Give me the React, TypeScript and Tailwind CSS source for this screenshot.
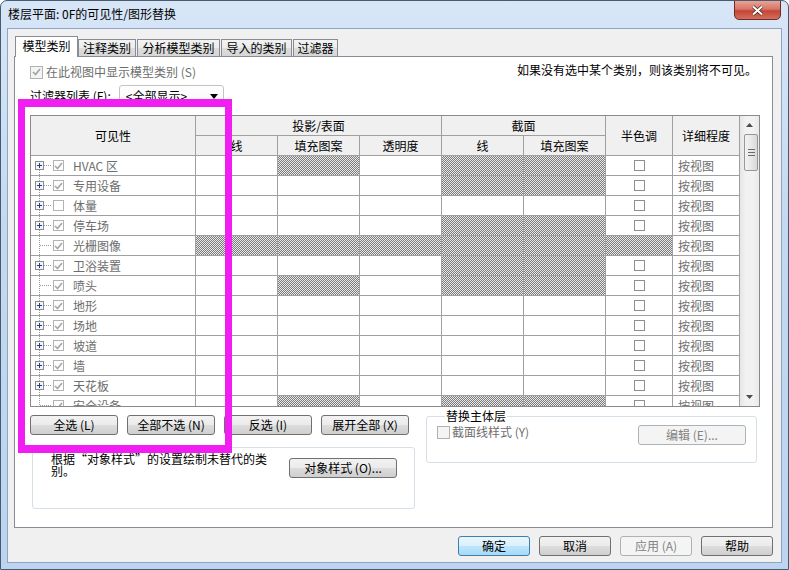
import React from 'react';

const hatch =
  'bg-[image:repeating-conic-gradient(#7c7c7c_0_25%,#e9e9e9_0_50%)] bg-[length:2px_2px]';

type Row = { name: string; plus: boolean; on: boolean; h: string };

// h: hatched flags for 投影线 / 投影填充 / 透明度 / 截面线 / 截面填充 / 半色调
const rows: Row[] = [
  { name: 'HVAC 区', plus: true, on: true, h: '010110' },
  { name: '专用设备', plus: true, on: true, h: '000110' },
  { name: '体量', plus: true, on: false, h: '000000' },
  { name: '停车场', plus: true, on: true, h: '000110' },
  { name: '光栅图像', plus: false, on: true, h: '111111' },
  { name: '卫浴装置', plus: true, on: true, h: '000110' },
  { name: '喷头', plus: false, on: true, h: '010110' },
  { name: '地形', plus: true, on: true, h: '000000' },
  { name: '场地', plus: true, on: true, h: '000000' },
  { name: '坡道', plus: true, on: true, h: '000000' },
  { name: '墙', plus: true, on: true, h: '000000' },
  { name: '天花板', plus: true, on: true, h: '000000' },
  { name: '安全设备', plus: false, on: true, h: '010110' },
];

const Tick = ({ color }: { color: string }) => (
  <svg width="9" height="8" viewBox="0 0 9 8">
    <path d="M1 4l2.5 2.5L8 1" fill="none" stroke={color} strokeWidth="1.7" />
  </svg>
);

const Tree = ({ plus, first }: { plus: boolean; first: boolean }) => (
  <svg width="20" height="19" className="shrink-0" shapeRendering="crispEdges">
    <line x1="8.5" y1={first ? 10 : 0} x2="8.5" y2="19" stroke="#9a9a9a" strokeDasharray="1 1" />
    <line x1={plus ? 13 : 9} y1="9.5" x2="20" y2="9.5" stroke="#9a9a9a" strokeDasharray="1 1" />
    {plus && (
      <>
        <rect x="4.5" y="5.5" width="8" height="8" fill="#f4f4f4" stroke="#8c8c8c" />
        <path d="M6 9.5h5M8.5 7v5" stroke="#1f3f8f" />
      </>
    )}
  </svg>
);

const Btn = ({ children, kind, cls }: { children: React.ReactNode; kind?: 'def' | 'off'; cls: string }) => {
  const look =
    kind === 'def'
      ? 'border-[#3c7fb1] bg-[image:linear-gradient(#eaf6fd,#d9f0fc_50%,#bee6fd_50%,#a7d9f5)] text-black'
      : kind === 'off'
        ? 'border-[#adb2b5] bg-[#f4f4f4] text-[#838383]'
        : 'border-[#707070] bg-[image:linear-gradient(#f2f2f2,#ebebeb_50%,#dddddd_50%,#cfcfcf)] text-black';
  return (
    <div className={`flex items-center justify-center h-[20px] rounded-[3px] border ${look} ${cls}`}>{children}</div>
  );
};

const headCell = 'flex items-center justify-center border-r border-b border-[#a0a0a0] bg-[#f0f0f0]';
const cell = 'h-[20px] border-r border-b border-[#a0a0a0]';

export default function App() {
  return (
    <div className="relative w-[789px] h-[570px] font-['Noto_Sans_CJK_SC',sans-serif] text-[12px] leading-[14px] text-black">
      <div className="flex flex-col w-full h-full rounded-t-[7px] border border-[#4a5a6e] bg-[image:linear-gradient(180deg,#d7e6f7,#c3d9f1_40%,#bcd4ef)] overflow-hidden">
        {/* title bar */}
        <div className="flex items-start h-[27px] shrink-0">
          <span className="ml-[7px] mt-[6px]">楼层平面: 0F的可见性/图形替换</span>
          <div className="ml-auto mr-[7px] w-[47px] h-[20px] -mt-px flex items-center justify-center rounded-b-[5px] border border-[#6f2c26] bg-[image:linear-gradient(#e8a496,#d77566_45%,#c54435_55%,#d0705c)]">
            <svg width="13" height="11" viewBox="0 0 13 11">
              <path d="M2 1.5l9 8M11 1.5l-9 8" stroke="#4a2420" strokeWidth="3.4" />
              <path d="M2 1.5l9 8M11 1.5l-9 8" stroke="#fff" strokeWidth="2" />
            </svg>
          </div>
        </div>

        {/* client area */}
        <div className="flex-1 ml-[6px] mr-[6px] mb-[6px] border border-[#8ea4c0] bg-[#f0f0f0] flex flex-col pl-[6px] pr-[8px] pt-[7px]">
          {/* tabs */}
          <div className="flex items-end h-[20px] pl-px">
            <div className="relative z-10 -mb-px w-[63px] h-[21px] border border-b-0 border-[#898c95] bg-white flex items-center justify-center pb-[2px]">
              模型类别
            </div>
            {[
              ['注释类别', 'w-[58px]'],
              ['分析模型类别', 'w-[83px] ml-px'],
              ['导入的类别', 'w-[71px] ml-px'],
              ['过滤器', 'w-[45px] ml-px'],
            ].map(([t, w]) => (
              <div
                key={t}
                className={`h-[17px] border border-b-0 border-[#898c95] bg-[image:linear-gradient(#f3f3f3,#ebebeb_50%,#dddddd_50%,#d6d6d6)] flex items-center justify-center ${w}`}
              >
                {t}
              </div>
            ))}
          </div>

          {/* tab page */}
          <div className="h-[472px] border border-[#898c95] bg-white flex flex-col px-[15px] pt-[7px]">
            <div className="flex items-center h-[16px]">
              <span className="w-[13px] h-[13px] border border-[#b1b1b1] bg-[#f4f4f4] flex items-center justify-center">
                <Tick color="#a4a4a4" />
              </span>
              <span className="ml-[3px] text-[#6d6d6d]">在此视图中显示模型类别 (S)</span>
              <span className="ml-auto -mt-[4px]">如果没有选中某个类别，则该类别将不可见。</span>
            </div>

            <div className="flex items-center h-[22px] mt-[5px]">
              <span>过滤器列表 (F):</span>
              <div className="ml-[8px] w-[105px] h-[22px] rounded-[3px] border border-[#c4c4c4] bg-[image:linear-gradient(#ffffff,#f7f7f7)] flex items-center pl-[6px] pr-[5px]">
                <span>&lt;全部显示&gt;</span>
                <svg className="ml-auto" width="8" height="5" viewBox="0 0 8 5">
                  <path d="M0 0h8L4 5z" fill="#000" />
                </svg>
              </div>
            </div>

            {/* grid */}
            <div className="mt-[8px] w-[730px] h-[292px] border border-[#8a8a8a] flex overflow-hidden">
              <div className="w-[709px] shrink-0">
                <div className="grid grid-cols-[165px_82px_82px_82px_82px_82px_67px_67px] auto-rows-[20px]">
                  <div className={`${headCell} row-span-2`}>可见性</div>
                  <div className={`${headCell} col-span-3`}>投影/表面</div>
                  <div className={`${headCell} col-span-2`}>截面</div>
                  <div className={`${headCell} row-span-2`}>半色调</div>
                  <div className={`${headCell} row-span-2`}>详细程度</div>
                  <div className={headCell}>线</div>
                  <div className={headCell}>填充图案</div>
                  <div className={headCell}>透明度</div>
                  <div className={headCell}>线</div>
                  <div className={headCell}>填充图案</div>

                  {rows.map((r, i) => (
                    <React.Fragment key={r.name}>
                      <div className={`${cell} flex items-center text-[#6d6d6d]`}>
                        <Tree plus={r.plus} first={i === 0} />
                        <span className="ml-[2px] w-[11px] h-[11px] border border-[#b3b3b3] bg-white flex items-center justify-center">
                          {r.on && <Tick color="#a8a8a8" />}
                        </span>
                        <span className="ml-[9px]">{r.name}</span>
                      </div>
                      {r.h.split('').map((f, j) =>
                        j < 5 ? (
                          <div key={j} className={`${cell} ${f === '1' ? hatch : 'bg-white'}`} />
                        ) : (
                          <div key={j} className={`${cell} flex items-center justify-center ${f === '1' ? hatch : 'bg-white'}`}>
                            {f !== '1' && <span className="w-[11px] h-[11px] border border-[#8e8f8f] bg-white" />}
                          </div>
                        ),
                      )}
                      <div className={`${cell} flex items-center pl-[5px] text-[#6d6d6d]`}>按视图</div>
                    </React.Fragment>
                  ))}
                </div>
              </div>

              {/* scrollbar */}
              <div className="w-[19px] flex flex-col bg-[image:linear-gradient(90deg,#e5e5e5,#f2f2f2_30%,#f2f2f2_70%,#e9e9e9)]">
                <div className="h-[18px] flex items-center justify-center">
                  <svg width="7" height="4" viewBox="0 0 7 4">
                    <path d="M0 4h7L3.5 0z" fill="#4d4d4d" />
                  </svg>
                </div>
                <div className="ml-[4px] w-[14px] h-[37px] rounded-[2px] border border-[#979797] bg-[image:linear-gradient(90deg,#f3f3f3,#e8e8e8_50%,#d8d8d8)] flex flex-col items-center justify-center gap-[2px]">
                  <span className="w-[7px] h-px bg-[#6b6b6b]" />
                  <span className="w-[7px] h-px bg-[#6b6b6b]" />
                  <span className="w-[7px] h-px bg-[#6b6b6b]" />
                </div>
                <div className="mt-auto h-[18px] flex items-center justify-center">
                  <svg width="7" height="4" viewBox="0 0 7 4">
                    <path d="M0 0h7L3.5 4z" fill="#4d4d4d" />
                  </svg>
                </div>
              </div>
            </div>

            {/* lower part */}
            <div className="flex mt-[2px]">
              <div className="w-[385px] pt-[6px] flex flex-col">
                <div className="flex gap-[9px]">
                  <Btn cls="w-[88px]">全选 (L)</Btn>
                  <Btn cls="w-[88px]">全部不选 (N)</Btn>
                  <Btn cls="w-[88px]">反选 (I)</Btn>
                  <Btn cls="w-[88px]">展开全部 (X)</Btn>
                </div>
                <div className="mt-[12px] ml-[2px] w-[383px] h-[62px] rounded-[3px] border border-[#d5dfe5] flex items-start pl-[18px] pr-[17px] pt-[5px]">
                  <p className="w-[218px] leading-[12px]">根据“对象样式”的设置绘制未替代的类别。</p>
                  <Btn cls="ml-auto mt-[5px] w-[108px]">对象样式 (O)...</Btn>
                </div>
              </div>

              <fieldset className="ml-[11px] w-[335px] h-[54px] rounded-[3px] border border-[#d5dfe5] flex pl-[10px] pr-[10px]">
                <legend className="ml-[8px] px-px">替换主体层</legend>
                <div className="flex items-start w-full -mt-[1px]">
                  <div className="flex items-center mt-[3px]">
                    <span className="w-[13px] h-[13px] border border-[#b1b1b1] bg-[#f4f4f4]" />
                    <span className="ml-[2px] text-[#6d6d6d]">截面线样式 (Y)</span>
                  </div>
                  <Btn kind="off" cls="ml-auto mt-[3px] w-[108px]">编辑 (E)...</Btn>
                </div>
              </fieldset>
            </div>
          </div>

          {/* dialog buttons */}
          <div className="flex justify-end gap-[9px] mt-[8px]">
            <Btn kind="def" cls="w-[72px]">确定</Btn>
            <Btn cls="w-[72px]">取消</Btn>
            <Btn kind="off" cls="w-[72px]">应用 (A)</Btn>
            <Btn cls="w-[72px]">帮助</Btn>
          </div>
        </div>
      </div>

      {/* annotation frame */}
      <div className="absolute left-[18px] top-[99px] w-[214px] h-[354px] border-[7px] border-y-[8px] border-[#f01ef0] pointer-events-none" />
    </div>
  );
}
